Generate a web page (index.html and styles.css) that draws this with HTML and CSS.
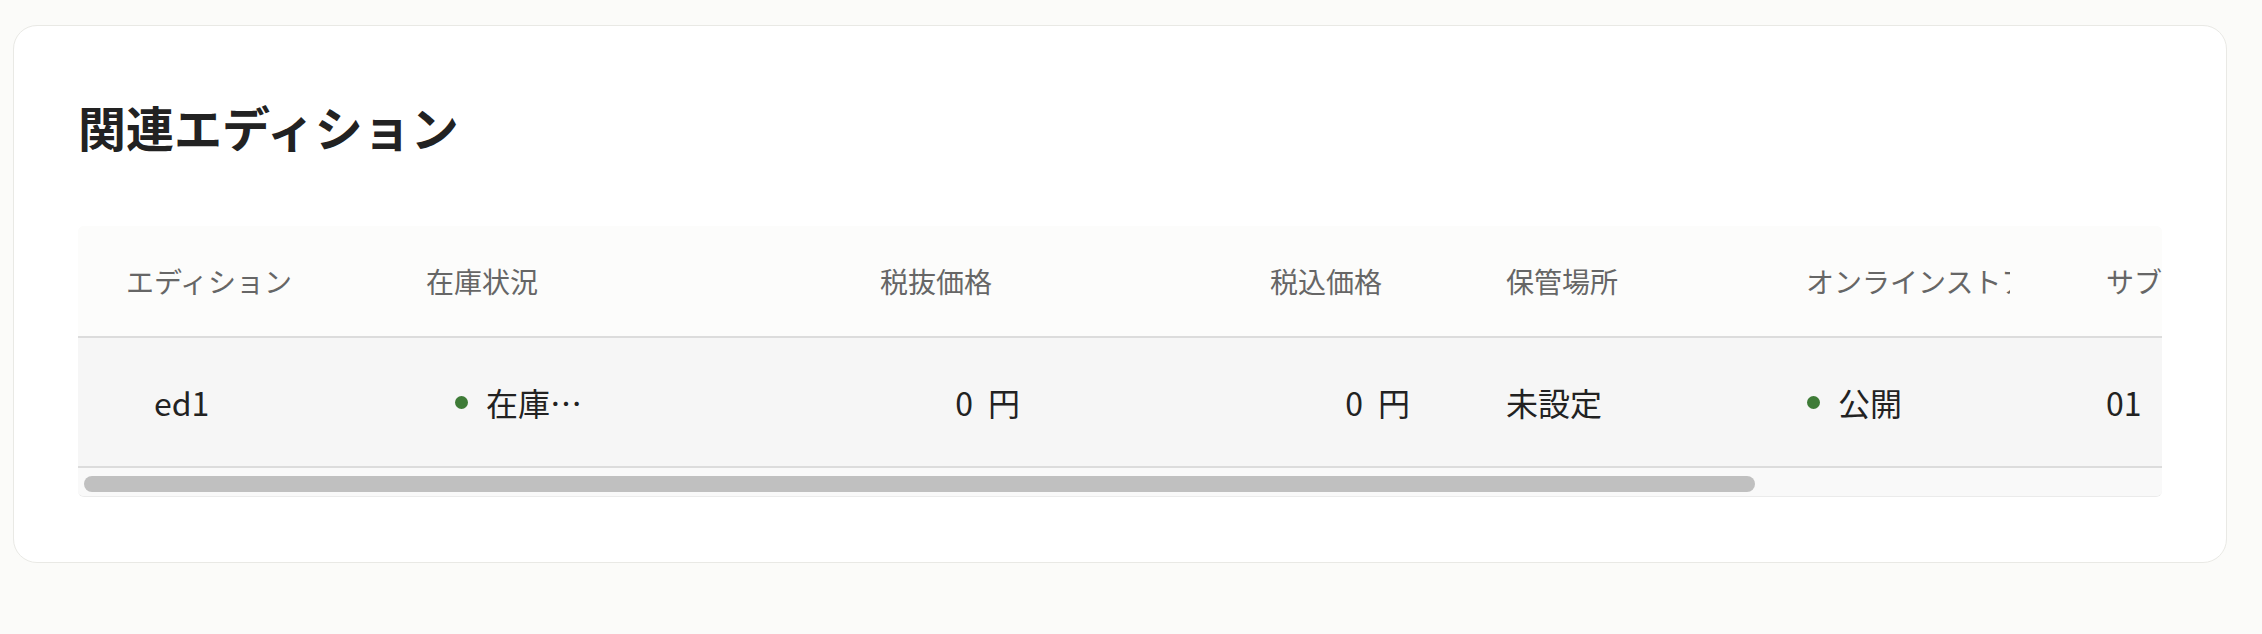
FILE: index.html
```html
<!DOCTYPE html>
<html lang="ja">
<head>
<meta charset="utf-8">
<title>関連エディション</title>
<link rel="stylesheet" href="styles.css">
</head>
<body>
<main class="page">
  <section class="card">
    <h2 class="card-title">関連エディション</h2>
    <div class="grid-wrap">
      <div class="grid-viewport">
        <div class="grid">
          <div class="row head">
            <div class="cell th"><span class="label">エディション</span></div>
            <div class="cell th"><span class="label">在庫状況</span></div>
            <div class="cell th num"><span class="label">税抜価格</span></div>
            <div class="cell th num"><span class="label">税込価格</span></div>
            <div class="cell th"><span class="label">保管場所</span></div>
            <div class="cell th"><span class="label">オンラインストア公開</span></div>
            <div class="cell th"><span class="label">サブコード</span></div>
            <div class="cell th"><span class="label">更新日</span></div>
          </div>
          <div class="row data">
            <div class="cell td"><span class="inset">ed1</span></div>
            <div class="cell td">
              <span class="status inset"><span class="dot"></span><span class="status-text">在庫あり</span></span>
            </div>
            <div class="cell td num">0<span class="unit">円</span></div>
            <div class="cell td num">0<span class="unit">円</span></div>
            <div class="cell td">未設定</div>
            <div class="cell td">
              <span class="status"><span class="dot"></span><span class="status-text">公開</span></span>
            </div>
            <div class="cell td">01</div>
            <div class="cell td">—</div>
          </div>
        </div>
      </div>
      <div class="scrollbar"><div class="thumb" style="width:1671px"></div></div>
    </div>
  </section>
</main>
</body>
</html>
```
FILE: styles.css
```css
* {
  box-sizing: border-box;
}

html, body {
  margin: 0;
  padding: 0;
  background: #fbfbf9;
}

body {
  font-family: "Noto Sans CJK JP", "Noto Sans", sans-serif;
  color: #222222;
}

.page {
  padding: 25px 35px 0 13px;
}

.card {
  background: #ffffff;
  border: 1px solid #e9e9e5;
  border-radius: 24px;
  padding: 64px 64px 65px 64px;
}

.card-title {
  margin: 0 0 64px 0;
  font-size: 48px;
  line-height: 72px;
  font-weight: 700;
  color: #222222;
}

.grid-wrap {
  border-radius: 6px;
  overflow: hidden;
  border-bottom: 1px solid #ebebeb;
  background: #f9f9f9;
}

.grid-viewport {
  overflow: hidden;
}

.grid {
  width: 2580px;
}

.row {
  display: grid;
  grid-template-columns: 300px 300px 390px 390px 300px 300px 300px 300px;
}

.head {
  height: 112px;
  background: #fcfcfb;
  border-bottom: 2px solid #dcdcdc;
}

.data {
  height: 130px;
  background: #f6f6f6;
  border-bottom: 2px solid #dcdcdc;
}

.cell {
  display: flex;
  align-items: center;
  padding: 0 48px;
  min-width: 0;
  overflow: hidden;
  white-space: nowrap;
}

.th {
  font-size: 28px;
  color: #666666;
  font-weight: 400;
}

.label {
  display: block;
  min-width: 0;
  max-width: 100%;
  overflow: hidden;
  text-overflow: clip;
  white-space: nowrap;
}

.td {
  font-size: 32px;
  color: #222222;
}

.num {
  justify-content: flex-end;
}

.th.num {
  padding-right: 76px;
}

.unit {
  margin-left: 15px;
}

.inset {
  padding: 0 28px;
}

.status {
  display: flex;
  align-items: center;
  gap: 18px;
  min-width: 0;
  width: 100%;
}

.dot {
  flex: none;
  width: 13px;
  height: 13px;
  margin-left: 1px;
  border-radius: 50%;
  background: #3e7b37;
}

.status-text {
  min-width: 0;
  overflow: hidden;
  text-overflow: ellipsis;
  white-space: nowrap;
}

.scrollbar {
  height: 28px;
  padding: 8px 6px 4px 6px;
  background: #f9f9f9;
}

.thumb {
  height: 16px;
  border-radius: 8px;
  background: #c0c0c0;
}
```
